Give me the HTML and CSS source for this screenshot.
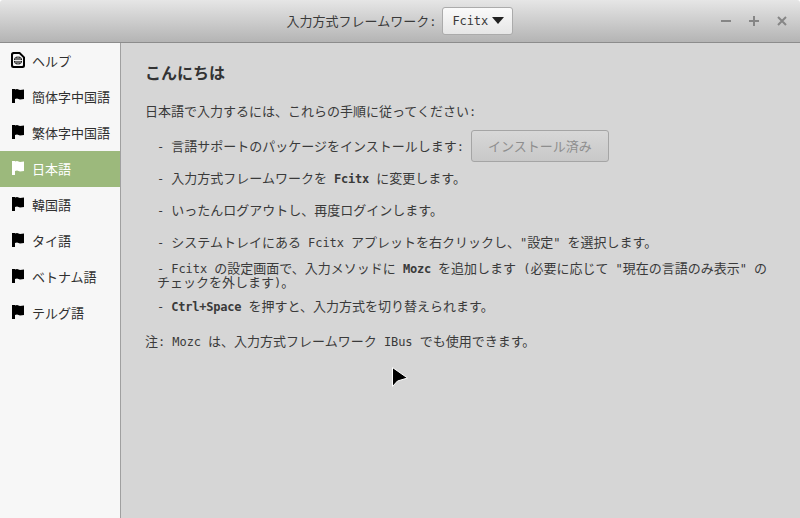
FILE: index.html
```html
<!DOCTYPE html>
<html lang="ja">
<head>
<meta charset="utf-8">
<title>入力方式</title>
<link rel="stylesheet" href="styles.css">
</head>
<body>
<div class="window">
  <header class="titlebar">
    <div class="title-center">
      <span>入力方式フレームワーク<span class="lat">:</span></span>
      <button class="combo"><span class="lat">Fcitx</span><svg class="caret" width="12" height="7" viewBox="0 0 12 7"><path d="M0 0h12L6 7z"/></svg></button>
    </div>
    <div class="wm">
      <svg width="10" height="10" viewBox="0 0 10 10"><path d="M0 5h10" /></svg>
      <svg width="10" height="10" viewBox="0 0 10 10"><path d="M0 5h10M5 0v10" /></svg>
      <svg width="10" height="10" viewBox="0 0 10 10"><path d="M1 1l8 8M9 1l-8 8" /></svg>
    </div>
  </header>
  <div class="main">
    <nav class="sidebar">
      <div class="nav-item"><svg class="ico" width="14" height="16" viewBox="0 0 14 16"><path d="M2.500 0H9l5 5v8.500a2.500 2.500 0 0 1-2.500 2.500h-9A2.500 2.500 0 0 1 0 13.500v-11A2.500 2.500 0 0 1 2.500 0z" fill="#000"/><path d="M3 2h5.200L12 5.800V13a1 1 0 0 1-1 1H3a1 1 0 0 1-1-1V3a1 1 0 0 1 1-1z" fill="#f7f7f7"/><circle cx="7" cy="8.500" r="4" fill="#000"/><path d="M3 8.500h8M7 4.500v8M5 5.500v6M9 5.500v6" stroke="#f7f7f7" stroke-width=".9"/></svg><span>ヘルプ</span></div>
      <div class="nav-item"><svg class="ico" width="14" height="16" viewBox="0 0 14 16"><path d="M1 1h3v.5l2-.5 3 1 4-.5v9.500l-4 .5-3-1-2 .5V15H1z"/></svg><span>簡体字中国語</span></div>
      <div class="nav-item"><svg class="ico" width="14" height="16" viewBox="0 0 14 16"><path d="M1 1h3v.5l2-.5 3 1 4-.5v9.500l-4 .5-3-1-2 .5V15H1z"/></svg><span>繁体字中国語</span></div>
      <div class="nav-item active"><svg class="ico" width="14" height="16" viewBox="0 0 14 16"><path d="M1 1h3v.5l2-.5 3 1 4-.5v9.500l-4 .5-3-1-2 .5V15H1z"/></svg><span>日本語</span></div>
      <div class="nav-item"><svg class="ico" width="14" height="16" viewBox="0 0 14 16"><path d="M1 1h3v.5l2-.5 3 1 4-.5v9.500l-4 .5-3-1-2 .5V15H1z"/></svg><span>韓国語</span></div>
      <div class="nav-item"><svg class="ico" width="14" height="16" viewBox="0 0 14 16"><path d="M1 1h3v.5l2-.5 3 1 4-.5v9.500l-4 .5-3-1-2 .5V15H1z"/></svg><span>タイ語</span></div>
      <div class="nav-item"><svg class="ico" width="14" height="16" viewBox="0 0 14 16"><path d="M1 1h3v.5l2-.5 3 1 4-.5v9.500l-4 .5-3-1-2 .5V15H1z"/></svg><span>ベトナム語</span></div>
      <div class="nav-item"><svg class="ico" width="14" height="16" viewBox="0 0 14 16"><path d="M1 1h3v.5l2-.5 3 1 4-.5v9.500l-4 .5-3-1-2 .5V15H1z"/></svg><span>テルグ語</span></div>
    </nav>
    <main class="content">
      <h1 class="heading">こんにちは</h1>
      <p class="intro">日本語で入力するには、これらの手順に従ってください<span class="lat">:</span></p>
      <div class="steps">
        <div class="step"><span><span class="lat">- </span>言語サポートのパッケージをインストールします<span class="lat">:</span></span><button class="installed" disabled>インストール済み</button></div>
        <div class="step"><span><span class="lat">- </span>入力方式フレームワークを<span class="lat"> <b>Fcitx</b> </span>に変更します。</span></div>
        <div class="step"><span><span class="lat">- </span>いったんログアウトし、再度ログインします。</span></div>
        <div class="step"><span><span class="lat">- </span>システムトレイにある<span class="lat"> Fcitx </span>アプレットを右クリックし、<span class="lat">"</span>設定<span class="lat">" </span>を選択します。</span></div>
        <div class="step wrap"><span><span class="lat">- Fcitx </span>の設定画面で、入力メソッドに<span class="lat"> <b>Mozc</b> </span>を追加します<span class="lat"> (</span>必要に応じて<span class="lat"> "</span>現在の言語のみ表示<span class="lat">" </span>のチェックを外します<span class="lat">)</span>。</span></div>
        <div class="step"><span><span class="lat">- <b>Ctrl+Space</b> </span>を押すと、入力方式を切り替えられます。</span></div>
      </div>
      <p class="note">注<span class="lat">: Mozc </span>は、入力方式フレームワーク<span class="lat"> IBus </span>でも使用できます。</p>
    </main>
  </div>
  <svg class="pointer" width="18" height="24" viewBox="0 0 18 24"><path d="M1.500 1.500V20.500L6.500 15 16.500 12Z" fill="#000" stroke="#fff" stroke-width="1" stroke-linejoin="round"/></svg>
</div>
</body>
</html>
```
FILE: styles.css
```css
* { box-sizing: border-box; }
html, body { margin: 0; height: 100%; }
body {
  width: 800px;
  height: 518px;
  overflow: hidden;
  background: #fff;
  font-family: "Noto Sans CJK JP", sans-serif;
  font-size: 13px;
  color: #3a3a3a;
}
.lat {
  font-family: "DejaVu Sans Mono", monospace;
  font-size: 12px;
  line-height: 1;
  letter-spacing: -0.07px;
}
.lat b { letter-spacing: -0.22px; }
.window {
  position: relative;
  width: 800px;
  height: 518px;
  display: flex;
  flex-direction: column;
  border-radius: 3px 3px 0 0;
  overflow: hidden;
}
.titlebar {
  height: 43px;
  flex: none;
  display: flex;
  align-items: center;
  justify-content: center;
  position: relative;
  background: linear-gradient(#e6e6e6, #b4b4b4);
  border-bottom: 1px solid #8c8c8c;
}
.title-center { display: flex; align-items: center; gap: 6px; padding: 0 0 1px; }
.combo {
  height: 28px;
  width: 71px;
  margin: 0;
  padding: 0 0 0 9px;
  display: flex;
  align-items: center;
  gap: 4px;
  font: inherit;
  color: inherit;
  background: linear-gradient(#fafafa, #e6e6e6);
  border: 1px solid #ababab;
  border-radius: 3px;
}
.caret { fill: #222; }
.wm {
  position: absolute;
  right: 13px;
  top: 16px;
  display: flex;
  gap: 18px;
}
.wm svg { fill: none; stroke: #868686; stroke-width: 2; }
.main { flex: 1; display: flex; min-height: 0; }
.sidebar {
  width: 121px;
  flex: none;
  background: #f7f7f7;
  border-right: 1px solid #a0a0a0;
}
.nav-item {
  height: 36px;
  display: flex;
  align-items: center;
  gap: 7px;
  padding: 0 0 2px 11px;
  color: #303030;
}
.nav-item .ico { fill: #000; flex: none; }
.nav-item.active { background: #9cb97c; color: #fff; }
.nav-item.active .ico { fill: #fff; }
.content {
  flex: 1;
  background: #d6d6d6;
  padding: 18px 30px 0 24px;
}
.heading {
  margin: 0;
  font-size: 16px;
  line-height: 22px;
  font-weight: 700;
  color: #333;
}
.intro { margin: 19px 0 0; line-height: 18px; }
.steps { margin-top: 10px; padding-left: 12px; display: flex; flex-direction: column; }
.step { min-height: 32px; display: flex; align-items: center; gap: 7px; line-height: 18px; }
.step.wrap { line-height: 14px; padding-top: 2px; }
.installed {
  width: 138px;
  height: 32px;
  margin: 0;
  padding: 0;
  font: inherit;
  color: #8e8e8e;
  background: linear-gradient(#d8d8d8, #c8c8c8);
  border: 1px solid #a5a5a5;
  border-radius: 3px;
}
.note { margin: 10px 0 0; line-height: 18px; }
.pointer { position: absolute; left: 391px; top: 366px; }
```
